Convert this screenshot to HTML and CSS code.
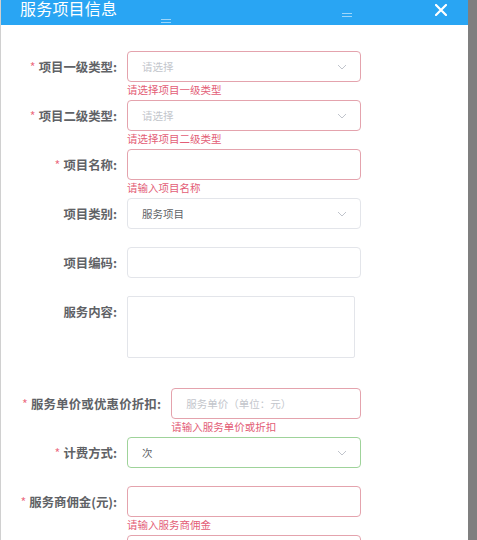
FILE: index.html
```html
<!DOCTYPE html>
<html lang="zh-CN">
  <head>
    <meta charset="UTF-8" />
    <meta name="viewport" content="width=device-width, initial-scale=1.0" />
    <title>服务项目信息</title>
    <link rel="stylesheet" href="styles.css">
  </head>

  <body>
    <div class="dialog">
      <div class="dialog-header">
        <span class="dialog-title">服务项目信息</span>
        <span class="mark mark-a"></span>
        <span class="mark mark-b"></span>
        <svg class="close" width="12" height="12" viewBox="0 0 12 12">
          <path d="M1 1 L11 11 M11 1 L1 11" stroke="#fff" stroke-width="2.2" stroke-linecap="round" />
        </svg>
      </div>

      <form class="dialog-body">
        <div class="form-item">
          <label class="label"><span class="star">*</span>项目一级类型:</label>
          <div class="field">
            <div class="input select is-error">
              <span class="placeholder">请选择</span>
              <svg class="arrow" width="10" height="6" viewBox="0 0 10 6"><path d="M1 1 L5 5 L9 1" fill="none" stroke="#c0c4cc" stroke-width="1" /></svg>
            </div>
            <div class="error">请选择项目一级类型</div>
          </div>
        </div>

        <div class="form-item">
          <label class="label"><span class="star">*</span>项目二级类型:</label>
          <div class="field">
            <div class="input select is-error">
              <span class="placeholder">请选择</span>
              <svg class="arrow" width="10" height="6" viewBox="0 0 10 6"><path d="M1 1 L5 5 L9 1" fill="none" stroke="#c0c4cc" stroke-width="1" /></svg>
            </div>
            <div class="error">请选择项目二级类型</div>
          </div>
        </div>

        <div class="form-item">
          <label class="label"><span class="star">*</span>项目名称:</label>
          <div class="field">
            <div class="input is-error"></div>
            <div class="error">请输入项目名称</div>
          </div>
        </div>

        <div class="form-item spaced">
          <label class="label">项目类别:</label>
          <div class="field">
            <div class="input select">
              <span class="value">服务项目</span>
              <svg class="arrow" width="10" height="6" viewBox="0 0 10 6"><path d="M1 1 L5 5 L9 1" fill="none" stroke="#c0c4cc" stroke-width="1" /></svg>
            </div>
          </div>
        </div>

        <div class="form-item spaced">
          <label class="label">项目编码:</label>
          <div class="field">
            <div class="input"></div>
          </div>
        </div>

        <div class="form-item textarea-item">
          <label class="label">服务内容:</label>
          <div class="field">
            <div class="textarea"></div>
          </div>
        </div>

        <div class="form-item">
          <label class="label wide"><span class="star">*</span>服务单价或优惠价折扣:</label>
          <div class="field">
            <div class="input is-error">
              <span class="placeholder">服务单价（单位：元）</span>
            </div>
            <div class="error">请输入服务单价或折扣</div>
          </div>
        </div>

        <div class="form-item spaced">
          <label class="label"><span class="star">*</span>计费方式:</label>
          <div class="field">
            <div class="input select is-success">
              <span class="value">次</span>
              <svg class="arrow" width="10" height="6" viewBox="0 0 10 6"><path d="M1 1 L5 5 L9 1" fill="none" stroke="#c0c4cc" stroke-width="1" /></svg>
            </div>
          </div>
        </div>

        <div class="form-item">
          <label class="label"><span class="star">*</span>服务商佣金(元):</label>
          <div class="field">
            <div class="input is-error"></div>
            <div class="error">请输入服务商佣金</div>
          </div>
        </div>

        <div class="form-item">
          <label class="label"></label>
          <div class="field">
            <div class="input is-error"></div>
          </div>
        </div>
      </form>
    </div>
  </body>
</html>
```

FILE: styles.css
```css
* {
  margin: 0;
  padding: 0;
  box-sizing: border-box;
  font-family: "Noto Sans CJK SC", "Noto Sans", sans-serif;
}

body {
  background-color: #7f7f7f;
  width: 477px;
  height: 540px;
  overflow: hidden;
}

.dialog {
  width: 468px;
  height: 540px;
  background-color: #fff;
  border-left: 1px solid #d0d0d0;
  overflow: hidden;
}

.dialog-header {
  position: relative;
  height: 25px;
  background-color: #29a5f3;
  display: flex;
  align-items: flex-start;
  justify-content: space-between;
  padding: 0 21px 0 19px;
}

.dialog-title {
  color: #fff;
  font-size: 16px;
  line-height: 16px;
  letter-spacing: 0.2px;
}

.close {
  margin-top: 4px;
}

.mark {
  position: absolute;
  width: 10px;
  height: 4px;
  border-top: 1px solid rgba(255, 255, 255, 0.55);
  border-bottom: 1px solid rgba(255, 255, 255, 0.55);
}

.mark-a {
  left: 160px;
  top: 19px;
}

.mark-b {
  left: 341px;
  top: 13px;
}

.dialog-body {
  padding: 26px 107px 0 21px;
}

.form-item {
  display: flex;
  align-items: flex-start;
}

.form-item.spaced {
  margin-bottom: 18px;
}

.form-item.textarea-item {
  margin-bottom: 30px;
}

.label {
  flex-shrink: 0;
  width: 105px;
  padding-right: 10px;
  display: flex;
  justify-content: flex-end;
  align-items: center;
  height: 31px;
  font-size: 12.4px;
  font-weight: 700;
  color: #606266;
  white-space: nowrap;
}

.label.wide {
  width: auto;
  letter-spacing: 0.2px;
}

.star {
  color: #ec6b80;
  font-weight: 400;
  margin-right: 3px;
}

.field {
  flex: 1;
}

.input {
  width: 100%;
  height: 31px;
  border: 1px solid #e3e5ea;
  border-radius: 4px;
  display: flex;
  align-items: center;
  justify-content: space-between;
  padding: 0 13px 0 14px;
  font-size: 10.5px;
}

.input.is-error {
  border-color: #e4a3ad;
}

.input.is-success {
  border-color: #9fd39a;
}

.placeholder {
  color: #c3c6cc;
}

.value {
  color: #606266;
}

.arrow {
  margin-top: 1px;
}

.textarea {
  width: 228px;
  height: 62px;
  border: 1px solid #e3e5ea;
  border-radius: 2px;
}

.error {
  height: 18px;
  line-height: 15px;
  font-size: 10.5px;
  color: #e35d76;
}
```
